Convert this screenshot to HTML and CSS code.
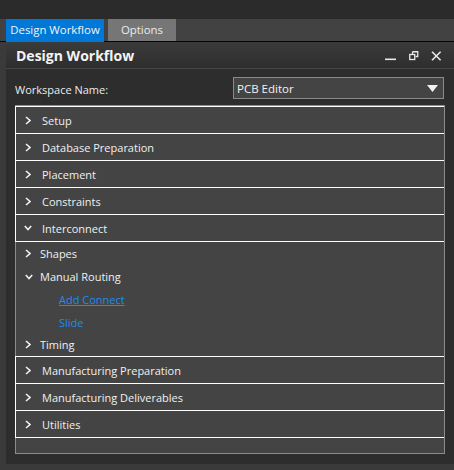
FILE: index.html
```html
<!DOCTYPE html>
<html>
<head>
<meta charset="utf-8">
<link rel="stylesheet" href="styles.css">
</head>
<body>
<div class="topbar"></div>
<div class="tabs">
  <div class="tab tab-active">Design Workflow</div>
  <div class="tab tab-inactive">Options</div>
</div>
<div class="frame">
  <div class="panel">
    <div class="panel-header">
      <div class="panel-title">Design Workflow</div>
      <div class="panel-controls">
        <svg class="ctl ctl-min" width="12" height="10" viewBox="0 0 12 10"><rect x="0" y="7.5" width="11" height="1.6" fill="#e8e8e8"/></svg>
        <svg class="ctl ctl-restore" width="10" height="10" viewBox="0 0 10 10"><path d="M3.5 0.75 H8.75 V5.5 H6.5 M3.5 0.75 V3" fill="none" stroke="#e8e8e8" stroke-width="1.3"/><rect x="0.75" y="3.5" width="5" height="5" fill="none" stroke="#e8e8e8" stroke-width="1.3"/></svg>
        <svg class="ctl ctl-close" width="11" height="10" viewBox="0 0 11 10"><path d="M1 0.7 L9.6 9.3 M9.6 0.7 L1 9.3" stroke="#e8e8e8" stroke-width="1.6" fill="none"/></svg>
      </div>
    </div>
    <div class="ws-row">
      <div class="ws-label">Workspace Name:</div>
      <div class="dropdown">
        <span class="dd-text">PCB Editor</span>
        <svg class="dd-arrow" width="11" height="7" viewBox="0 0 11 7"><path d="M0 0 H11 L5.5 7 Z" fill="#f2f2f2"/></svg>
      </div>
    </div>
    <div class="accordion">
      <div class="sec"><svg class="chev" width="6" height="9" viewBox="0 0 6 9"><path d="M1 1 L5 4.5 L1 8" fill="none" stroke="#f0f0f0" stroke-width="1.6"/></svg><span>Setup</span></div>
      <div class="sec"><svg class="chev" width="6" height="9" viewBox="0 0 6 9"><path d="M1 1 L5 4.5 L1 8" fill="none" stroke="#f0f0f0" stroke-width="1.6"/></svg><span>Database Preparation</span></div>
      <div class="sec"><svg class="chev" width="6" height="9" viewBox="0 0 6 9"><path d="M1 1 L5 4.5 L1 8" fill="none" stroke="#f0f0f0" stroke-width="1.6"/></svg><span>Placement</span></div>
      <div class="sec"><svg class="chev" width="6" height="9" viewBox="0 0 6 9"><path d="M1 1 L5 4.5 L1 8" fill="none" stroke="#f0f0f0" stroke-width="1.6"/></svg><span>Constraints</span></div>
      <div class="sec sec-open"><svg class="chev chev-down" width="8" height="6" viewBox="0 0 8 6"><path d="M0.8 1 L4 4.6 L7.2 1" fill="none" stroke="#f0f0f0" stroke-width="1.6"/></svg><span>Interconnect</span></div>
      <div class="sec-body">
        <div class="item"><svg class="chev" width="6" height="9" viewBox="0 0 6 9"><path d="M1 1 L5 4.5 L1 8" fill="none" stroke="#f0f0f0" stroke-width="1.6"/></svg><span>Shapes</span></div>
        <div class="item"><svg class="chev chev-down" width="8" height="6" viewBox="0 0 8 6"><path d="M0.8 1 L4 4.6 L7.2 1" fill="none" stroke="#f0f0f0" stroke-width="1.6"/></svg><span>Manual Routing</span></div>
        <div class="item item-link"><a class="link link-u">Add Connect</a></div>
        <div class="item item-link item-short"><a class="link">Slide</a></div>
        <div class="item"><svg class="chev" width="6" height="9" viewBox="0 0 6 9"><path d="M1 1 L5 4.5 L1 8" fill="none" stroke="#f0f0f0" stroke-width="1.6"/></svg><span>Timing</span></div>
      </div>
      <div class="sec sec-after"><svg class="chev" width="6" height="9" viewBox="0 0 6 9"><path d="M1 1 L5 4.5 L1 8" fill="none" stroke="#f0f0f0" stroke-width="1.6"/></svg><span>Manufacturing Preparation</span></div>
      <div class="sec"><svg class="chev" width="6" height="9" viewBox="0 0 6 9"><path d="M1 1 L5 4.5 L1 8" fill="none" stroke="#f0f0f0" stroke-width="1.6"/></svg><span>Manufacturing Deliverables</span></div>
      <div class="sec sec-last"><svg class="chev" width="6" height="9" viewBox="0 0 6 9"><path d="M1 1 L5 4.5 L1 8" fill="none" stroke="#f0f0f0" stroke-width="1.6"/></svg><span>Utilities</span></div>
    </div>
  </div>
</div>
</body>
</html>
```
FILE: styles.css
```css
html, body {
  margin: 0;
  padding: 0;
}
body {
  width: 454px;
  height: 470px;
  overflow: hidden;
  background: #3a3a3a;
  font-family: "Open Sans", "Noto Sans", sans-serif;
  color: #f0f0f0;
}
.topbar {
  height: 19px;
  background: #2b2b2b;
}
.tabs {
  height: 22px;
  background: #424242;
  border-bottom: 1px solid #050505;
  display: flex;
  padding-left: 6px;
  gap: 4px;
}
.tab {
  font-size: 11.4px;
  line-height: 22px;
  height: 22px;
  text-align: center;
}
.tab-active {
  width: 98px;
  background: #0078d7;
  color: #f4f4f4;
  height: 23px;
}
.tab-inactive {
  width: 68px;
  background: #767676;
  color: #ececec;
}
.frame {
  padding: 0 0 6px 6px;
}
.panel {
  height: 422px;
  background: #2d2d2d;
  display: flex;
  flex-direction: column;
}
.panel-header {
  height: 26px;
  border-bottom: 1px solid #474747;
  background: linear-gradient(#3b3b3b, #2e2e2e);
  display: flex;
  align-items: center;
  justify-content: space-between;
  padding: 0 12px 0 10px;
}
.panel-title {
  font-weight: bold;
  font-size: 14px;
  color: #f4f4f4;
  padding-top: 1px;
}
.panel-controls {
  display: flex;
  align-items: center;
  gap: 12px;
  padding-top: 2px;
}
.ctl { display: block; }
.ws-row {
  display: flex;
  align-items: center;
  justify-content: space-between;
  padding: 8px 10px 0 9px;
}
.ws-label {
  font-size: 11px;
  color: #ececec;
  padding-top: 2px;
}
.dropdown {
  height: 20px;
  border: 1px solid #8a8a8a;
  background: #444444;
  display: flex;
  align-items: center;
  justify-content: space-between;
  padding: 0 5px 0 3px;
  box-sizing: content-box;
  width: 201px;
}
.dd-text {
  font-size: 11.5px;
  color: #f2f2f2;
}
.dd-arrow { display: block; }
.accordion {
  margin: 6px 9px 0 9px;
  height: 347px;
  border: 1px solid #8c8c8c;
  background: #444444;
  box-sizing: content-box;
  width: 428px;
}
.sec {
  height: 26px;
  border-top: 1px solid #ffffff;
  border-left: 1px solid #ffffff;
  margin-left: -1px;
  display: flex;
  align-items: center;
  font-size: 11px;
  color: #f0f0f0;
  padding-left: 8px;
}
.sec-open, .sec-last {
  border-bottom: 1px solid #ffffff;
}
.sec-after {
  border-top: 1px solid #ffffff;
}
.sec .chev {
  margin-right: 11px;
  margin-left: 1px;
}
.sec .chev-down {
  margin-left: 0;
  margin-right: 10px;
}
.sec-body {
  display: flex;
  flex-direction: column;
}
.item {
  height: 23px;
  display: flex;
  align-items: center;
  font-size: 11px;
  color: #f0f0f0;
  padding-left: 9px;
}
.item-short { height: 22px; }
.item .chev {
  margin-right: 9px;
}
.item .chev-down {
  margin-right: 7px;
}
.item-link {
  padding-left: 43px;
}
.link {
  color: #1f8bef;
}
.link-u {
  text-decoration: underline;
}
```
